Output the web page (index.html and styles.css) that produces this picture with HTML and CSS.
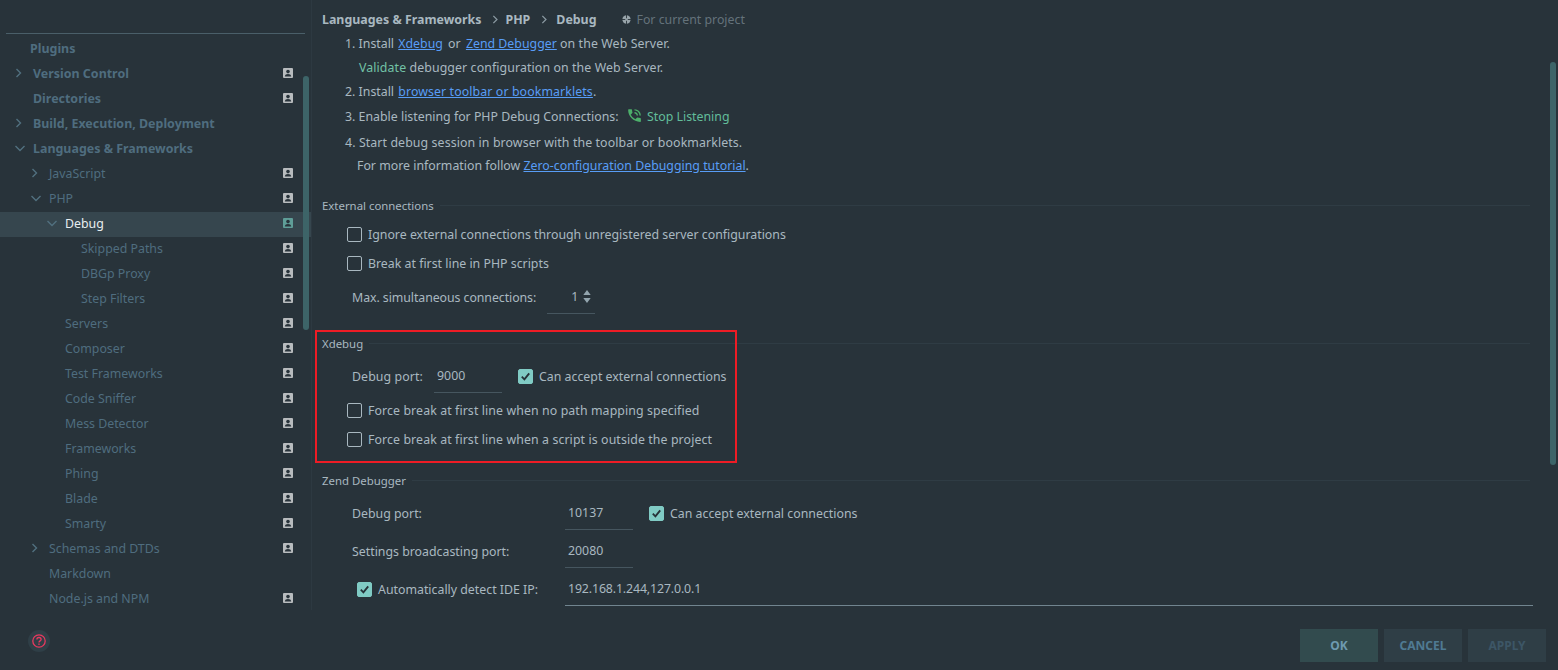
FILE: index.html
```html
<!DOCTYPE html>
<html lang="en">
<head>
  <meta charset="UTF-8">
  <title>Settings - Debug</title>
  <link rel="stylesheet" href="styles.css">
</head>
<body>
  <svg class="sprites" width="0" height="0">
    <symbol id="person" viewBox="0 0 10 10">
      <rect width="10" height="10" rx="1" fill="currentColor"/>
      <circle cx="5" cy="3.6" r="1.8" fill="#28333a"/>
      <path d="M1.8 8.4c0-1.7 1.5-2.5 3.2-2.5s3.2.8 3.2 2.5z" fill="#28333a"/>
    </symbol>
    <symbol id="chev-right" viewBox="0 0 10 10">
      <path d="M1.500 1l4 4-4 4" fill="none" stroke="currentColor" stroke-width="1.400"/>
    </symbol>
    <symbol id="chev-down" viewBox="0 0 10 10">
      <path d="M.5 3l4.500 4.500L9.500 3" fill="none" stroke="currentColor" stroke-width="1.400"/>
    </symbol>
    <symbol id="tick" viewBox="0 0 14 14">
      <path d="M3 7.2l2.8 2.8L11 3.6" fill="none" stroke="#263238" stroke-width="2"/>
    </symbol>
  </svg>

  <div class="panes">
    <!-- settings tree -->
    <aside class="sidebar">
      <div class="search-rule"></div>
      <ul class="tree">
        <li class="node bold plugins"><span>Plugins</span></li>
        <li class="node bold lvl0"><svg class="chev"><use href="#chev-right"/></svg><span>Version Control</span><svg class="badge"><use href="#person"/></svg></li>
        <li class="node bold lvl0 leaf"><span>Directories</span><svg class="badge"><use href="#person"/></svg></li>
        <li class="node bold lvl0"><svg class="chev"><use href="#chev-right"/></svg><span>Build, Execution, Deployment</span></li>
        <li class="node bold lvl0"><svg class="chev"><use href="#chev-down"/></svg><span>Languages &amp; Frameworks</span></li>
        <li class="node lvl1"><svg class="chev"><use href="#chev-right"/></svg><span>JavaScript</span><svg class="badge"><use href="#person"/></svg></li>
        <li class="node lvl1"><svg class="chev"><use href="#chev-down"/></svg><span>PHP</span><svg class="badge"><use href="#person"/></svg></li>
        <li class="node lvl2 selected"><svg class="chev"><use href="#chev-down"/></svg><span>Debug</span><svg class="badge"><use href="#person"/></svg></li>
        <li class="node lvl3"><span>Skipped Paths</span><svg class="badge"><use href="#person"/></svg></li>
        <li class="node lvl3"><span>DBGp Proxy</span><svg class="badge"><use href="#person"/></svg></li>
        <li class="node lvl3"><span>Step Filters</span><svg class="badge"><use href="#person"/></svg></li>
        <li class="node lvl2 leaf"><span>Servers</span><svg class="badge"><use href="#person"/></svg></li>
        <li class="node lvl2 leaf"><span>Composer</span><svg class="badge"><use href="#person"/></svg></li>
        <li class="node lvl2 leaf"><span>Test Frameworks</span><svg class="badge"><use href="#person"/></svg></li>
        <li class="node lvl2 leaf"><span>Code Sniffer</span><svg class="badge"><use href="#person"/></svg></li>
        <li class="node lvl2 leaf"><span>Mess Detector</span><svg class="badge"><use href="#person"/></svg></li>
        <li class="node lvl2 leaf"><span>Frameworks</span><svg class="badge"><use href="#person"/></svg></li>
        <li class="node lvl2 leaf"><span>Phing</span><svg class="badge"><use href="#person"/></svg></li>
        <li class="node lvl2 leaf"><span>Blade</span><svg class="badge"><use href="#person"/></svg></li>
        <li class="node lvl2 leaf"><span>Smarty</span><svg class="badge"><use href="#person"/></svg></li>
        <li class="node lvl1"><svg class="chev"><use href="#chev-right"/></svg><span>Schemas and DTDs</span><svg class="badge"><use href="#person"/></svg></li>
        <li class="node lvl1 leaf"><span>Markdown</span></li>
        <li class="node lvl1 leaf"><span>Node.js and NPM</span><svg class="badge"><use href="#person"/></svg></li>
      </ul>
      <div class="scrollbar tree-scroll"></div>
    </aside>

    <main class="content">
      <div class="crumbs">
        <b>Languages &amp; Frameworks</b>
        <svg class="crumb-sep"><use href="#chev-right"/></svg>
        <b>PHP</b>
        <svg class="crumb-sep"><use href="#chev-right"/></svg>
        <b>Debug</b>
        <svg class="scope-icon" viewBox="0 0 10 10">
          <circle cx="5" cy="5" r="4.6" fill="#98a4aa"/>
          <path d="M5 0v10M0 5h10" stroke="#28333a" stroke-width="1"/>
          <rect x="3.6" y="3.6" width="2.8" height="2.8" fill="#98a4aa"/>
        </svg>
        <span class="scope">For current project</span>
      </div>

      <div class="doc">
        <p class="doc-line">1. Install <a class="gap-l" href="#">Xdebug</a> <span class="gap-x">or</span> <a href="#">Zend Debugger</a> <span class="wide">on the Web Server.</span></p>
        <p class="doc-line sub wide"><span class="validate">Validate</span> debugger configuration on the Web Server.</p>
        <p class="doc-line tall">2. Install <a class="gap-l wide" href="#">browser toolbar or bookmarklets</a>.</p>
        <p class="doc-line tall">3. Enable listening for PHP Debug Connections:
          <span class="listen">
            <svg class="phone" viewBox="0 0 24 24"><path d="M20 15.5c-1.25 0-2.45-.2-3.57-.57a1 1 0 0 0-1.02.24l-2.2 2.2a15.05 15.05 0 0 1-6.59-6.59l2.2-2.21a.96.96 0 0 0 .25-1A11.36 11.36 0 0 1 8.5 4a1 1 0 0 0-1-1H4a1 1 0 0 0-1 1c0 9.39 7.61 17 17 17a1 1 0 0 0 1-1v-3.5a1 1 0 0 0-1-1zM19 12h2a9 9 0 0 0-9-9v2c3.87 0 7 3.13 7 7zm-4 0h2c0-2.76-2.24-5-5-5v2c1.66 0 3 1.34 3 3z"/></svg>
            Stop Listening
          </span>
        </p>
        <p class="doc-line tall start wide">4. Start debug session in browser with the toolbar or bookmarklets.</p>
        <p class="doc-line more">For more information follow <a href="#">Zero-configuration Debugging tutorial</a>.</p>
      </div>

      <section class="group group-external">
        <h3 class="group-title"><span>External connections</span></h3>
        <div class="check-row"><span class="check"></span>Ignore external connections through unregistered server configurations</div>
        <div class="check-row"><span class="check"></span>Break at first line in PHP scripts</div>
        <div class="field-row max-row">
          <label class="tight">Max. simultaneous connections:</label>
          <div class="field spinner">1
            <svg class="spin-arrows" viewBox="0 0 8 14"><path d="M4 0l4 5.5H0zM4 14L0 8.500h8z"/></svg>
          </div>
        </div>
      </section>

      <section class="group group-xdebug">
        <div class="highlight"></div>
        <h3 class="group-title"><span>Xdebug</span></h3>
        <div class="field-row">
          <label class="wide">Debug port:</label>
          <div class="field port-short">9000</div>
          <span class="check checked"><svg><use href="#tick"/></svg></span>
          <span class="check-label">Can accept external connections</span>
        </div>
        <div class="check-row first"><span class="check"></span><span class="wide">Force break at first line when no path mapping specified</span></div>
        <div class="check-row"><span class="check"></span><span class="wide">Force break at first line when a script is outside the project</span></div>
      </section>

      <section class="group group-zend">
        <h3 class="group-title"><span>Zend Debugger</span></h3>
        <div class="zend-grid">
          <label>Debug port:</label>
          <div class="field-row">
            <div class="field port-long">10137</div>
            <span class="check checked"><svg><use href="#tick"/></svg></span>
            <span class="check-label">Can accept external connections</span>
          </div>
          <label>Settings broadcasting port:</label>
          <div class="field-row"><div class="field port-long">20080</div></div>
          <label class="ip-label"><span class="check checked"><svg><use href="#tick"/></svg></span>Automatically detect IDE IP:</label>
          <div class="field ip">192.168.1.244,127.0.0.1</div>
        </div>
      </section>
      <div class="scrollbar content-scroll"></div>
    </main>
  </div>

  <footer class="footer">
    <div class="help">
      <svg viewBox="0 0 14 14" width="14" height="14">
        <circle cx="7" cy="7" r="6.2" fill="none" stroke="#e8395f" stroke-width="1.300"/>
        <path d="M4.900 5.500c0-1.300 1-2 2.100-2s2.100.7 2.100 1.900c0 1.500-2.100 1.500-2.100 3.100" fill="none" stroke="#e8395f" stroke-width="1.300"/>
        <rect x="6.300" y="9.500" width="1.400" height="1.400" fill="#e8395f"/>
      </svg>
    </div>
    <div class="buttons">
      <button class="btn btn-ok">OK</button>
      <button class="btn">CANCEL</button>
      <button class="btn btn-off">APPLY</button>
    </div>
  </footer>
</body>
</html>
```

FILE: styles.css
```css
* {
  box-sizing: border-box;
}
html, body {
  margin: 0;
  height: 670px;
  overflow: hidden;
}
body {
  background: #28333a;
  color: #a9b8c0;
  font-family: "Noto Sans", sans-serif;
  font-size: 12.35px;
}
.sprites {
  position: absolute;
}
.panes {
  display: flex;
  height: 610px;
}
.wide {
  letter-spacing: .1px;
}
.tight {
  letter-spacing: -.07px;
}

/* tree */
.sidebar {
  position: relative;
  width: 311px;
  flex: none;
  overflow: hidden;
}
.search-rule {
  height: 1px;
  margin: 33px 6px 3px 6px;
  background: #4a5f69;
}
.tree {
  list-style: none;
  margin: 0;
  padding: 0;
}
.node {
  display: flex;
  align-items: center;
  height: 25px;
  padding-bottom: 3px;
  color: #4f6d7f;
}
.node.bold {
  font-weight: 700;
  font-size: 12.45px;
}
.node span {
  flex: 1;
}
.chev {
  width: 10px;
  height: 10px;
  margin-right: 8px;
  color: #51707f;
  flex: none;
}
.plugins {
  padding-left: 30px;
}
.lvl0 {
  padding-left: 15px;
}
.lvl1 {
  padding-left: 31px;
}
.lvl2 {
  padding-left: 47px;
}
.lvl3 {
  padding-left: 81px;
}
.lvl0.leaf {
  padding-left: 33px;
}
.lvl1.leaf {
  padding-left: 49px;
}
.lvl2.leaf {
  padding-left: 65px;
}
.badge {
  width: 10px;
  height: 10px;
  margin-right: 18px;
  color: #b8bcbe;
  flex: none;
}
.selected {
  background: #36464e;
  color: #e8eef0;
}
.selected .badge {
  color: #5f9e98;
}
.scrollbar {
  position: absolute;
  width: 6px;
  background: #3d6468;
  border-radius: 3px;
}
.tree-scroll {
  left: 303px;
  top: 76px;
  height: 254px;
}
.content-scroll {
  left: 1238px;
  top: 62px;
  height: 403px;
}

/* right side */
.content {
  position: relative;
  flex: 1;
  padding: 7px 28px 0 10px;
  border-left: 1px solid #2d3941;
  overflow: hidden;
}
.crumbs {
  display: flex;
  align-items: center;
  height: 24px;
}
.crumbs b {
  color: #a9b8c0;
  font-size: 12.4px;
}
.crumb-sep {
  width: 9px;
  height: 9px;
  margin: 0 4px 0 11px;
  color: #8b9aa2;
}
.crumb-sep + b + .crumb-sep {
  margin-right: 6px;
}
.scope-icon {
  width: 9px;
  height: 9px;
  margin-left: 25px;
}
.scope {
  margin-left: 6px;
  color: #64727a;
}
.doc {
  padding-top: 1px;
}
.doc p {
  margin: 0;
}
.doc-line {
  height: 24px;
  line-height: 24px;
  padding-left: 23px;
}
.doc-line.tall {
  height: 25px;
}
.doc-line.start {
  padding-top: 1px;
}
.doc-line.sub {
  padding-left: 37px;
}
.doc-line.more {
  height: 23px;
  line-height: 22px;
  padding-left: 35px;
}
.doc a {
  color: #589df6;
}
.gap-l {
  margin-left: 1px;
}
.gap-x {
  margin: 0 2px;
}
.validate {
  color: #72c2a6;
}
.listen {
  margin-left: 4px;
  color: #62bd9a;
}
.phone {
  width: 17px;
  height: 17px;
  margin-right: 1px;
  fill: #4caf6a;
  vertical-align: -3px;
}

/* option groups */
.group {
  position: relative;
}
.group-external {
  margin-top: 17px;
}
.group-xdebug {
  margin-top: 19px;
}
.group-zend {
  margin-top: 16px;
}
.group-title {
  display: flex;
  align-items: center;
  height: 20px;
  margin: 0;
  font-size: 11.4px;
  font-weight: 400;
}
.group-title::after {
  content: "";
  flex: 1;
  height: 1px;
  margin-left: 6px;
  background: #2f3c44;
}
.check-row {
  display: flex;
  align-items: center;
  height: 29px;
  padding-left: 25px;
  padding-bottom: 1px;
}
.group-external .group-title {
  margin-bottom: 5px;
}
.check-row.first {
  margin-top: 3px;
}
.check {
  display: inline-block;
  width: 15px;
  height: 15px;
  margin-right: 6px;
  border: 1px solid #a9b8c0;
  border-radius: 2px;
  flex: none;
}
.check.checked {
  background: #80cbc4;
  border-color: #80cbc4;
}
.check svg {
  display: block;
  width: 13px;
  height: 13px;
}
.field-row {
  display: flex;
  align-items: center;
  height: 34px;
  padding-left: 30px;
}
.max-row {
  margin-top: 2px;
}
.group-xdebug .group-title {
  margin-bottom: 6px;
}
.field {
  height: 34px;
  line-height: 33px;
  padding-left: 3px;
  border-bottom: 1px solid #46565f;
}
.spinner {
  display: flex;
  align-items: center;
  justify-content: flex-end;
  width: 48px;
  margin-left: 11px;
  padding-right: 4px;
}
.spin-arrows {
  width: 8px;
  height: 13px;
  margin-left: 5px;
  fill: #93a5ae;
}
.port-short {
  width: 68px;
  margin: 0 16px 0 11px;
}
.port-long {
  width: 68px;
  margin-right: 16px;
}
.zend-grid {
  display: grid;
  grid-template-columns: 213px 1fr;
  row-gap: 4px;
  margin: 6px -3px 0 30px;
  align-items: center;
}
.zend-grid .field-row {
  padding-left: 0;
}
.ip-label {
  display: flex;
  align-items: center;
  padding-left: 5px;
}
.field.ip {
  border-bottom-color: #71858f;
  letter-spacing: -.13px;
}
.highlight {
  position: absolute;
  left: -7px;
  top: -3px;
  width: 422px;
  height: 133px;
  border: 2px solid #ee1c25;
  pointer-events: none;
}

/* bottom bar */
.footer {
  display: flex;
  justify-content: space-between;
  height: 60px;
  padding: 19px 12px 0 28px;
}
.help {
  display: flex;
  align-items: center;
  justify-content: center;
  width: 22px;
  height: 22px;
  margin-top: 1px;
  border-radius: 50%;
  background: #2f3f47;
}
.buttons {
  display: flex;
  gap: 6px;
}
.btn {
  width: 78px;
  height: 33px;
  border: none;
  background: #2f3e46;
  color: #4f7a93;
  font-family: "Noto Sans", sans-serif;
  font-size: 12px;
  font-weight: 700;
}
.btn-ok {
  background: #324b4e;
  color: #6e9ab0;
}
.btn-off {
  color: #3d5666;
}
```
